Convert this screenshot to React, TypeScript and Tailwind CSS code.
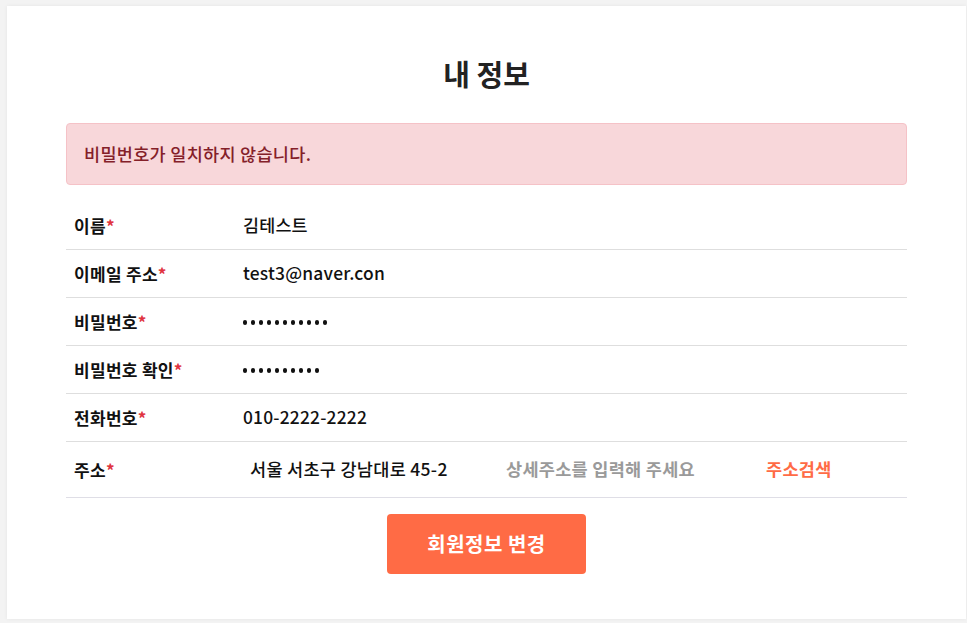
import React from "react";

const font = { fontFamily: '"Noto Sans CJK KR", "Noto Sans", sans-serif' };

function Label({ children }: { children: React.ReactNode }) {
  return (
    <div className="w-[177px] shrink-0 pl-2 text-[17px] font-bold tracking-[0.3px] text-[#111]">
      {children}
      <span className="text-[#e03340]">*</span>
    </div>
  );
}

function Dots({ n }: { n: number }) {
  return (
    <div className="flex items-center gap-[3.6px] pt-[2px]">
      {Array.from({ length: n }).map((_, i) => (
        <span key={i} className="block h-[4.4px] w-[4.4px] rounded-full bg-[#111]" />
      ))}
    </div>
  );
}

function Row({ label, value }: { label: string; value: React.ReactNode }) {
  return (
    <div className="flex h-[48px] items-center border-b border-[#dedede]">
      <Label>{label}</Label>
      <div className="text-[17.4px] font-medium tracking-[0.2px] text-[#111]">{value}</div>
    </div>
  );
}

export default function App() {
  return (
    <div className="min-h-[623px] w-full bg-[#f3f3f3] pl-[7px] pr-[1px] pt-[6px] pb-[4px]" style={font}>
      <div className="h-[613px] bg-white px-[59px] shadow-[0_0_4px_rgba(0,0,0,0.06)]">
        <h1 className="pt-[47px] text-center text-[29px] font-bold leading-[40px] text-[#222]">내 정보</h1>
        <div className="mt-[30px] flex h-[62px] items-center rounded-[4px] border border-[#f5c2c7] bg-[#f8d7da] pl-[17px] text-[17.5px] font-medium tracking-[0.3px] text-[#842029]">
          비밀번호가 일치하지 않습니다.
        </div>
        <div className="mt-[17px]">
          <Row label="이름" value="김테스트" />
          <Row label="이메일 주소" value="test3@naver.con" />
          <Row label="비밀번호" value={<Dots n={11} />} />
          <Row label="비밀번호 확인" value={<Dots n={10} />} />
          <Row label="전화번호" value="010-2222-2222" />
          <div className="flex h-[56px] items-center border-b border-[#dfdee6]">
            <Label>주소</Label>
            <div className="ml-[7px] w-[256px] text-[17.5px] font-medium tracking-[0.3px] text-[#111]">서울 서초구 강남대로 45-2</div>
            <div className="w-[260px] text-[17.5px] font-bold tracking-[0.3px] text-[#9a9a9a]">상세주소를 입력해 주세요</div>
            <div className="text-[17.5px] font-bold tracking-[0.3px] text-[#ff6b45]">주소검색</div>
          </div>
        </div>
        <div className="mt-[16px] flex justify-center">
          <button className="h-[60px] w-[199px] rounded-[4px] bg-[#ff6b45] text-[20px] font-bold tracking-[0.5px] text-white">
            회원정보 변경
          </button>
        </div>
      </div>
    </div>
  );
}
